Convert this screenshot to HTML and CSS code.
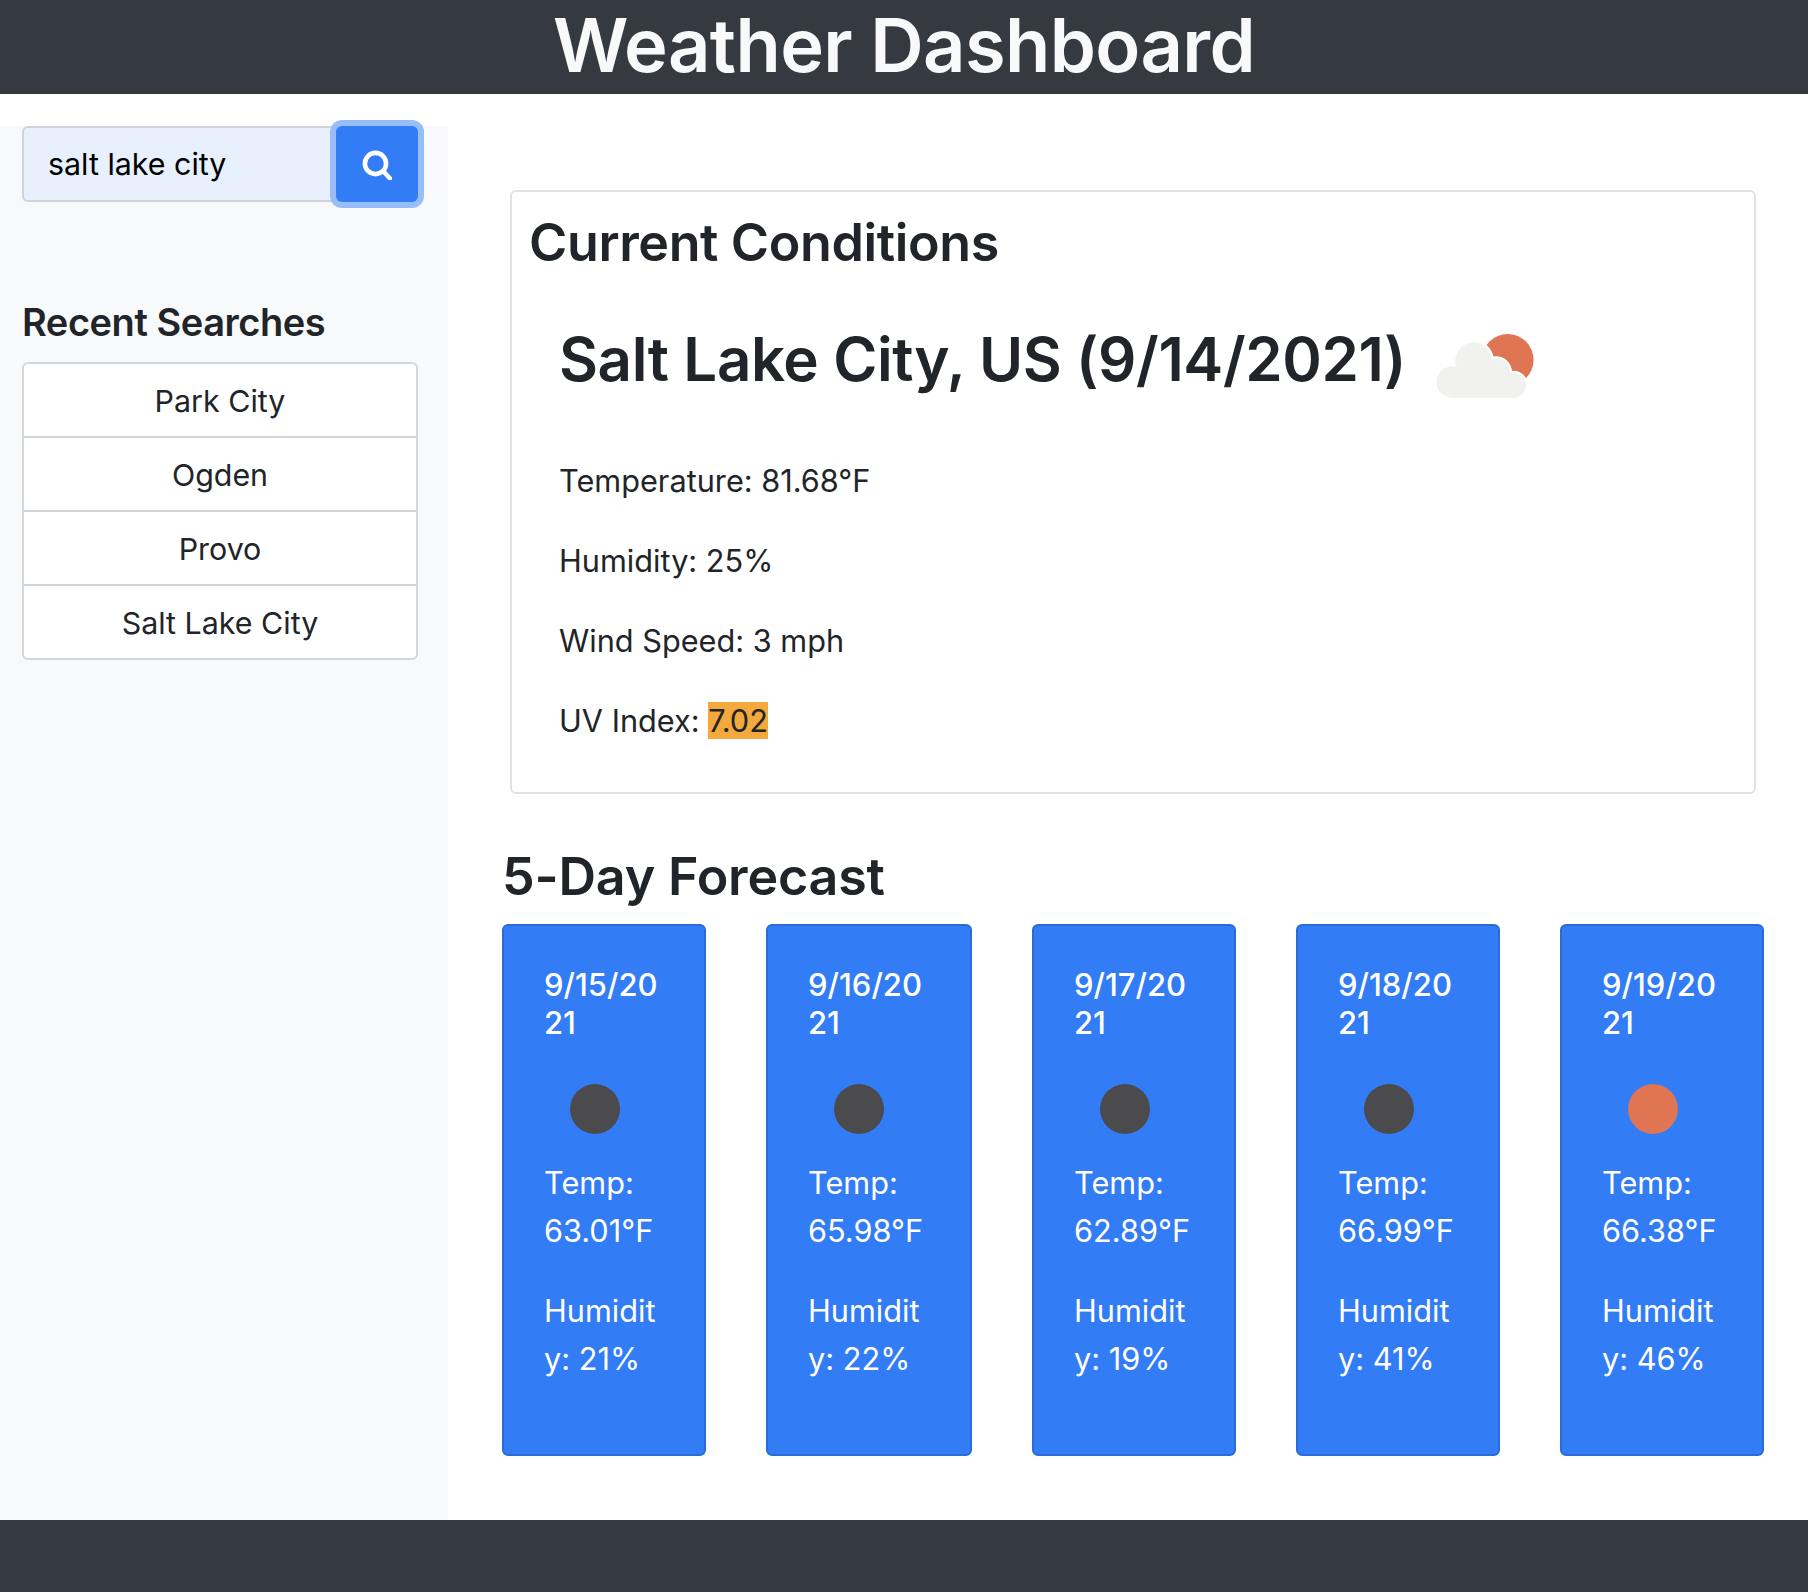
FILE: index.html
```html
<!DOCTYPE html>
<html>
  <head>
    <meta charset="utf-8">
    <title>Weather Dashboard</title>
    <link rel="stylesheet" href="styles.css">
  </head>
  <body>
    <header class="top-bar">
      <h1 class="page-title">Weather Dashboard</h1>
    </header>
    <div class="page-row">
      <aside class="sidebar">
        <form class="search-group">
          <input class="search-input" type="text" value="salt lake city">
          <button class="search-btn" type="button" aria-label="Search">
            <svg width="30" height="30" viewBox="0 0 30 30">
              <circle cx="13.5" cy="13.5" r="10.6" fill="none" stroke="#fff" stroke-width="4.6"/>
              <path d="M22.5 22.5l5.5 6" fill="none" stroke="#fff" stroke-width="4.4" stroke-linecap="round"/>
            </svg>
          </button>
        </form>
        <h4 class="recent-title">Recent Searches</h4>
        <ul class="recent-list">
          <li>Park City</li>
          <li>Ogden</li>
          <li>Provo</li>
          <li>Salt Lake City</li>
        </ul>
      </aside>
      <main class="content">
        <section class="current-card">
          <h3 class="current-title">Current Conditions</h3>
          <div class="current-body">
            <div class="city-row">
              <h2 class="city-name">Salt Lake City, US (9/14/2021)</h2>
              <svg class="city-icon" width="98" height="64" viewBox="165 100 293 193">
                <circle cx="380" cy="178" r="78" fill="#e07553"/>
                <g fill="#fff" stroke="#fff" stroke-width="12">
                  <circle cx="277" cy="180" r="55"/>
                  <circle cx="345" cy="215" r="42"/>
                  <circle cx="397" cy="255" r="38"/>
                </g>
                <g fill="#f1f1f0">
                  <circle cx="213" cy="245" r="48"/>
                  <circle cx="277" cy="180" r="55"/>
                  <circle cx="345" cy="215" r="42"/>
                  <circle cx="397" cy="255" r="38"/>
                  <rect x="213" y="220" width="184" height="73"/>
                </g>
              </svg>
            </div>
            <p class="stat">Temperature: 81.68°F</p>
            <p class="stat">Humidity: 25%</p>
            <p class="stat">Wind Speed: 3 mph</p>
            <p class="stat">UV Index: <span class="uv-badge">7.02</span></p>
          </div>
        </section>
        <h3 class="forecast-title">5-Day Forecast</h3>
        <div class="forecast-row">
          <div class="day-card">
            <h5 class="day-date">9/15/2021</h5>
            <svg class="day-icon" width="50" height="50"><circle cx="25" cy="25" r="25" fill="#4b4b4d"/></svg>
            <p class="day-line">Temp: 63.01°F</p>
            <p class="day-line">Humidity: 21%</p>
          </div>
          <div class="day-card">
            <h5 class="day-date">9/16/2021</h5>
            <svg class="day-icon" width="50" height="50"><circle cx="25" cy="25" r="25" fill="#4b4b4d"/></svg>
            <p class="day-line">Temp: 65.98°F</p>
            <p class="day-line">Humidity: 22%</p>
          </div>
          <div class="day-card">
            <h5 class="day-date">9/17/2021</h5>
            <svg class="day-icon" width="50" height="50"><circle cx="25" cy="25" r="25" fill="#4b4b4d"/></svg>
            <p class="day-line">Temp: 62.89°F</p>
            <p class="day-line">Humidity: 19%</p>
          </div>
          <div class="day-card">
            <h5 class="day-date">9/18/2021</h5>
            <svg class="day-icon" width="50" height="50"><circle cx="25" cy="25" r="25" fill="#4b4b4d"/></svg>
            <p class="day-line">Temp: 66.99°F</p>
            <p class="day-line">Humidity: 41%</p>
          </div>
          <div class="day-card">
            <h5 class="day-date">9/19/2021</h5>
            <svg class="day-icon" width="50" height="50"><circle cx="25" cy="25" r="25" fill="#e07553"/></svg>
            <p class="day-line">Temp: 66.38°F</p>
            <p class="day-line">Humidity: 46%</p>
          </div>
        </div>
      </main>
    </div>
    <footer class="bottom-bar"></footer>
  </body>
</html>
```

FILE: styles.css
```css
* {
  box-sizing: border-box;
}
body {
  margin: 0;
  font-family: Inter, "Liberation Sans", sans-serif;
  color: #212529;
  background-color: #fff;
}
h1, h2, h3, h4, h5, p, ul {
  margin: 0;
  padding: 0;
  font-weight: 500;
}

.top-bar {
  height: 94px;
  background-color: #343a40;
  text-align: center;
}
.page-title {
  color: #f8f9fa;
  font-size: 74px;
  font-weight: 600;
  letter-spacing: -0.6px;
  line-height: 90px;
}

.page-row {
  display: flex;
  margin-top: 32px;
}
.sidebar {
  width: 448px;
  height: 1394px;
  padding-left: 22px;
  background-color: #f8f9fa;
}
.search-group {
  display: flex;
  width: 396px;
  height: 76px;
}
.search-input {
  flex: 1;
  min-width: 0;
  padding: 0 24px;
  font-family: inherit;
  font-size: 30.4px;
  color: #000;
  background-color: #e8f0fe;
  border: 2px solid #ced4da;
  border-right: 0;
  border-radius: 6px 0 0 6px;
}
.search-btn {
  width: 82px;
  padding: 2px 0 0;
  display: flex;
  align-items: center;
  justify-content: center;
  background-color: #327cf6;
  border: 0;
  border-radius: 6px;
  box-shadow: 0 0 0 6px #98bdf9;
}
.recent-title {
  margin-top: 97px;
  margin-bottom: 17px;
  font-size: 38px;
  font-weight: 600;
  letter-spacing: -0.45px;
  line-height: 46px;
}
.recent-list {
  width: 396px;
  list-style: none;
  background-color: #fff;
  border: 2px solid #d3d5d8;
  border-radius: 6px;
}
.recent-list li {
  height: 74px;
  font-size: 30.4px;
  font-weight: 400;
  line-height: 74px;
  text-align: center;
  border-bottom: 2px solid #d3d5d8;
}
.recent-list li:last-child {
  height: 72px;
  border-bottom: 0;
}

.content {
  flex: 1;
  padding-left: 54px;
}
.current-card {
  width: 1246px;
  height: 604px;
  margin-top: 64px;
  margin-left: 8px;
  padding: 22px 17px 0;
  border: 2px solid #dee2e6;
  border-radius: 6px;
}
.current-title {
  font-size: 52px;
  font-weight: 600;
  letter-spacing: -0.38px;
  line-height: 58px;
}
.current-body {
  padding-left: 30px;
}
.city-row {
  display: flex;
  align-items: center;
  margin-top: 51px;
  margin-bottom: 64px;
  height: 72px;
}
.city-name {
  font-size: 60px;
  font-weight: 600;
  letter-spacing: -0.4px;
  line-height: 72px;
}
.city-icon {
  margin-top: 14px;
  margin-left: 30px;
}
.stat {
  margin-bottom: 36px;
  font-size: 30.7px;
  font-weight: 400;
  line-height: 44px;
}
.uv-badge {
  background-color: #f4a93c;
}

.forecast-title {
  margin-top: 53px;
  margin-bottom: 17px;
  font-size: 52px;
  font-weight: 600;
  letter-spacing: -0.2px;
  line-height: 60px;
}
.forecast-row {
  display: flex;
  justify-content: space-between;
  width: 1262px;
}
.day-card {
  width: 204px;
  height: 532px;
  padding: 40px 40px 0;
  color: #fff;
  background-color: #327cf6;
  border: 2px solid #2a6bd6;
  border-radius: 6px;
}
.day-card:nth-child(2) {
  width: 206px;
}
.day-date {
  font-size: 31px;
  line-height: 38px;
  overflow-wrap: anywhere;
}
.day-icon {
  display: block;
  margin: 42px 0 25px 26px;
}
.day-line {
  margin-bottom: 32px;
  font-size: 30.7px;
  font-weight: 400;
  line-height: 48px;
  overflow-wrap: anywhere;
}

.bottom-bar {
  height: 72px;
  background-color: #343a40;
}
```
